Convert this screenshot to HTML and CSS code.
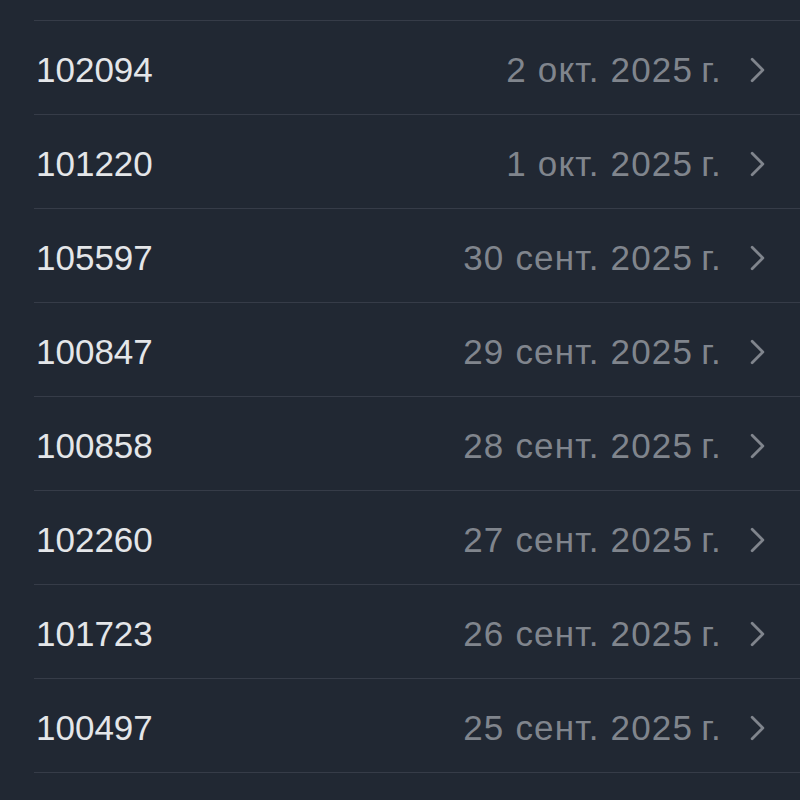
FILE: index.html
```html
<!DOCTYPE html>
<html lang="ru">

<head>
    <meta charset="UTF-8">
    <meta name="viewport" content="width=device-width, initial-scale=1.0">
    <title>Заказы</title>
    <link rel="stylesheet" href="styles.css">
</head>

<body class="body">
    <div class="list">
        <div class="row"><span class="num">102094</span><span class="date">2 окт. 2025&#8201;г.</span><svg class="chev" viewBox="0 0 14 24"><path d="M2 2 L12 12 L2 22"/></svg></div>
        <div class="row"><span class="num">101220</span><span class="date">1 окт. 2025&#8201;г.</span><svg class="chev" viewBox="0 0 14 24"><path d="M2 2 L12 12 L2 22"/></svg></div>
        <div class="row"><span class="num">105597</span><span class="date">30 сент. 2025&#8201;г.</span><svg class="chev" viewBox="0 0 14 24"><path d="M2 2 L12 12 L2 22"/></svg></div>
        <div class="row"><span class="num">100847</span><span class="date">29 сент. 2025&#8201;г.</span><svg class="chev" viewBox="0 0 14 24"><path d="M2 2 L12 12 L2 22"/></svg></div>
        <div class="row"><span class="num">100858</span><span class="date">28 сент. 2025&#8201;г.</span><svg class="chev" viewBox="0 0 14 24"><path d="M2 2 L12 12 L2 22"/></svg></div>
        <div class="row"><span class="num">102260</span><span class="date">27 сент. 2025&#8201;г.</span><svg class="chev" viewBox="0 0 14 24"><path d="M2 2 L12 12 L2 22"/></svg></div>
        <div class="row"><span class="num">101723</span><span class="date">26 сент. 2025&#8201;г.</span><svg class="chev" viewBox="0 0 14 24"><path d="M2 2 L12 12 L2 22"/></svg></div>
        <div class="row"><span class="num">100497</span><span class="date">25 сент. 2025&#8201;г.</span><svg class="chev" viewBox="0 0 14 24"><path d="M2 2 L12 12 L2 22"/></svg></div>
    </div>
</body>

</html>
```

FILE: styles.css
```css
html,
.body {
    margin: 0;
    background-color: #212833;
}

.body {
    font-family: 'Liberation Sans', Arial, sans-serif;
    font-size: 35px;
    padding-top: 20px;
}

.list {
    margin-left: 34px;
    border-bottom: 1px solid #363c48;
}

.row {
    display: flex;
    align-items: center;
    height: 94px;
    border-top: 1px solid #363c48;
    padding-left: 2px;
    padding-right: 35px;
    padding-top: 4px;
    box-sizing: border-box;
}

.num {
    color: #e4e6e9;
    flex: 1;
}

.date {
    color: #80858d;
    letter-spacing: 1.2px;
    margin-right: -1px;
}

.chev {
    width: 15px;
    height: 26px;
    margin-left: 29px;
    fill: none;
    stroke: #80858d;
    stroke-width: 2.6;
    stroke-linecap: round;
    stroke-linejoin: round;
}
```
